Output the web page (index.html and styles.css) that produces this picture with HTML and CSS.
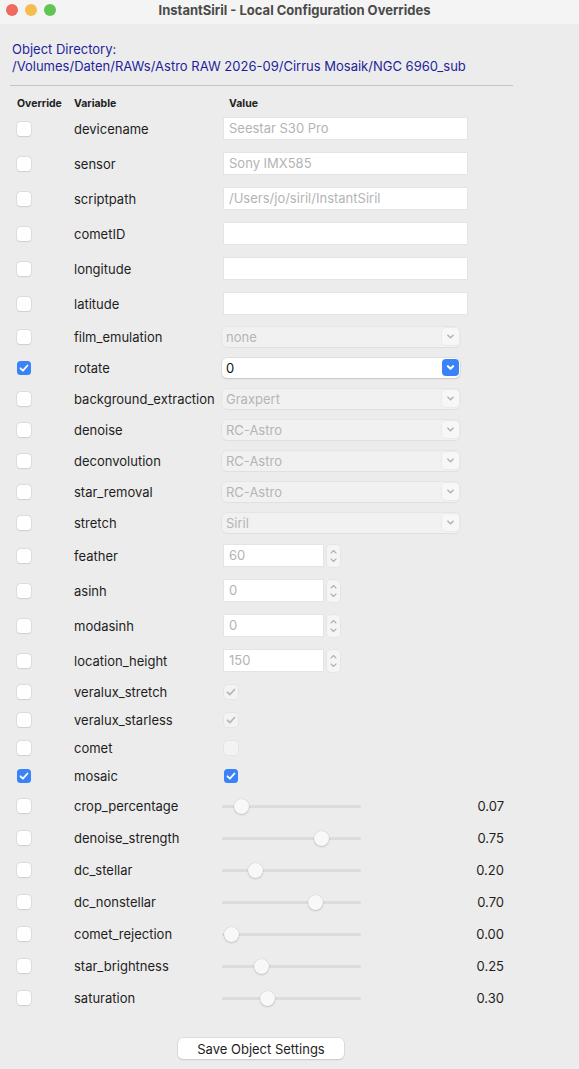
FILE: index.html
```html
<!DOCTYPE html>
<html>
<head>
<meta charset="utf-8">
<link rel="stylesheet" href="styles.css">
</head>
<body>
<div class="titlebar">
  <div class="lights"><span class="light red"></span><span class="light yellow"></span><span class="light green"></span></div>
  <div class="title">InstantSiril - Local Configuration Overrides</div>
</div>
<div class="main">
  <div class="dir">Object Directory:<br>/Volumes/Daten/RAWs/Astro RAW 2026-09/Cirrus Mosaik/NGC 6960_sub</div>
  <div class="rule"></div>
  <div class="table">
    <div class="row head"><span>Override</span><span>Variable</span><span class="vh">Value</span></div>

    <div class="row r-text"><span class="cb"></span><span class="var">devicename</span><div class="tin ph">Seestar S30 Pro</div></div>
    <div class="row r-text"><span class="cb"></span><span class="var">sensor</span><div class="tin ph">Sony IMX585</div></div>
    <div class="row r-text"><span class="cb"></span><span class="var">scriptpath</span><div class="tin ph">/Users/jo/siril/InstantSiril</div></div>
    <div class="row r-text"><span class="cb"></span><span class="var">cometID</span><div class="tin"></div></div>
    <div class="row r-text"><span class="cb"></span><span class="var">longitude</span><div class="tin"></div></div>
    <div class="row r-text"><span class="cb"></span><span class="var">latitude</span><div class="tin"></div></div>

    <div class="row r-drop"><span class="cb"></span><span class="var">film_emulation</span><div class="dd"><span>none</span><span class="chev"><svg viewBox="0 0 10 10"><path d="M3 4l2 2 2-2"/></svg></span></div></div>
    <div class="row r-drop"><span class="cb on"><svg viewBox="0 0 14 14"><path d="M3.5 7.3l2.4 2.4 4.6-5.2"/></svg></span><span class="var">rotate</span><div class="dd active"><span>0</span><span class="chev"><svg viewBox="0 0 10 10"><path d="M3 4l2 2 2-2"/></svg></span></div></div>
    <div class="row r-drop"><span class="cb"></span><span class="var">background_extraction</span><div class="dd"><span>Graxpert</span><span class="chev"><svg viewBox="0 0 10 10"><path d="M3 4l2 2 2-2"/></svg></span></div></div>
    <div class="row r-drop"><span class="cb"></span><span class="var">denoise</span><div class="dd"><span>RC-Astro</span><span class="chev"><svg viewBox="0 0 10 10"><path d="M3 4l2 2 2-2"/></svg></span></div></div>
    <div class="row r-drop"><span class="cb"></span><span class="var">deconvolution</span><div class="dd"><span>RC-Astro</span><span class="chev"><svg viewBox="0 0 10 10"><path d="M3 4l2 2 2-2"/></svg></span></div></div>
    <div class="row r-drop"><span class="cb"></span><span class="var">star_removal</span><div class="dd"><span>RC-Astro</span><span class="chev"><svg viewBox="0 0 10 10"><path d="M3 4l2 2 2-2"/></svg></span></div></div>
    <div class="row r-drop"><span class="cb"></span><span class="var">stretch</span><div class="dd"><span>Siril</span><span class="chev"><svg viewBox="0 0 10 10"><path d="M3 4l2 2 2-2"/></svg></span></div></div>

    <div class="row r-spin"><span class="cb"></span><span class="var">feather</span><div class="spin"><div class="sin">60</div><div class="step"><svg viewBox="0 0 12 22"><path d="M3.5 8l2.5-2.5 2.5 2.5M3.5 14l2.5 2.5 2.5-2.5"/></svg></div></div></div>
    <div class="row r-spin"><span class="cb"></span><span class="var">asinh</span><div class="spin"><div class="sin">0</div><div class="step"><svg viewBox="0 0 12 22"><path d="M3.5 8l2.5-2.5 2.5 2.5M3.5 14l2.5 2.5 2.5-2.5"/></svg></div></div></div>
    <div class="row r-spin"><span class="cb"></span><span class="var">modasinh</span><div class="spin"><div class="sin">0</div><div class="step"><svg viewBox="0 0 12 22"><path d="M3.5 8l2.5-2.5 2.5 2.5M3.5 14l2.5 2.5 2.5-2.5"/></svg></div></div></div>
    <div class="row r-spin"><span class="cb"></span><span class="var">location_height</span><div class="spin"><div class="sin">150</div><div class="step"><svg viewBox="0 0 12 22"><path d="M3.5 8l2.5-2.5 2.5 2.5M3.5 14l2.5 2.5 2.5-2.5"/></svg></div></div></div>

    <div class="row r-check"><span class="cb"></span><span class="var">veralux_stretch</span><span class="cb vcb dis"><svg viewBox="0 0 14 14"><path d="M3.5 7.3l2.4 2.4 4.6-5.2"/></svg></span></div>
    <div class="row r-check"><span class="cb"></span><span class="var">veralux_starless</span><span class="cb vcb dis"><svg viewBox="0 0 14 14"><path d="M3.5 7.3l2.4 2.4 4.6-5.2"/></svg></span></div>
    <div class="row r-check"><span class="cb"></span><span class="var">comet</span><span class="cb vcb dis"></span></div>
    <div class="row r-check"><span class="cb on"><svg viewBox="0 0 14 14"><path d="M3.5 7.3l2.4 2.4 4.6-5.2"/></svg></span><span class="var">mosaic</span><span class="cb vcb on"><svg viewBox="0 0 14 14"><path d="M3.5 7.3l2.4 2.4 4.6-5.2"/></svg></span></div>

    <div class="row r-slide"><span class="cb"></span><span class="var">crop_percentage</span><div class="sl"><div class="track"><span class="thumb" style="left:10px"></span></div><span class="val">0.07</span></div></div>
    <div class="row r-slide"><span class="cb"></span><span class="var">denoise_strength</span><div class="sl"><div class="track"><span class="thumb" style="left:90px"></span></div><span class="val">0.75</span></div></div>
    <div class="row r-slide"><span class="cb"></span><span class="var">dc_stellar</span><div class="sl"><div class="track"><span class="thumb" style="left:24px"></span></div><span class="val">0.20</span></div></div>
    <div class="row r-slide"><span class="cb"></span><span class="var">dc_nonstellar</span><div class="sl"><div class="track"><span class="thumb" style="left:84px"></span></div><span class="val">0.70</span></div></div>
    <div class="row r-slide"><span class="cb"></span><span class="var">comet_rejection</span><div class="sl"><div class="track"><span class="thumb" style="left:0px"></span></div><span class="val">0.00</span></div></div>
    <div class="row r-slide"><span class="cb"></span><span class="var">star_brightness</span><div class="sl"><div class="track"><span class="thumb" style="left:30px"></span></div><span class="val">0.25</span></div></div>
    <div class="row r-slide"><span class="cb"></span><span class="var">saturation</span><div class="sl"><div class="track"><span class="thumb" style="left:36px"></span></div><span class="val">0.30</span></div></div>
  </div>
  <div class="btnrow"><button class="btn">Save Object Settings</button></div>
</div>
</body>
</html>
```
FILE: styles.css
```css
* { box-sizing: border-box; }
html, body { margin: 0; padding: 0; }
body {
  width: 579px;
  height: 1069px;
  background: #ececec;
  font-family: Inter, "Liberation Sans", Arial, sans-serif;
  font-size: 13px;
  color: #1e1e1e;
  overflow: hidden;
}
.titlebar {
  height: 24px;
  background: #f4f4f4;
  position: relative;
  display: flex;
  align-items: center;
  justify-content: center;
}
.lights {
  position: absolute;
  left: 6px;
  top: 4px;
  display: flex;
  gap: 7px;
}
.light { width: 12px; height: 12px; border-radius: 50%; display: block; }
.red { background: #ee6a5f; }
.yellow { background: #f5bd4f; }
.green { background: #61c555; }
.title {
  font-weight: bold;
  font-size: 13px;
  color: #4a4a4a;
  margin-left: 10px;
  margin-top: -4px;
}
.main { padding: 17px 0 0 12px; }
.dir {
  color: #1f1f9a;
  font-size: 13px;
  line-height: 17px;
}
.rule {
  width: 503px;
  height: 1px;
  background: #c4c4c4;
  margin: 10px 0 10px -2px;
}
.table { margin-left: 5px; }
.row {
  display: grid;
  grid-template-columns: 57px 148px 282px;
  align-items: center;
}
.head { height: 15px; font-size: 10.5px; font-weight: bold; color: #222; }
.head .vh { padding-left: 7px; }
.r-text, .r-spin { height: 35px; }
.r-drop { height: 31px; }
.r-check { height: 28px; }
.r-slide { height: 32px; }
.var { font-size: 13px; color: #1e1e1e; white-space: nowrap; }
.cb {
  width: 14px;
  height: 14px;
  border-radius: 3.5px;
  background: #fff;
  box-shadow: 0 0 0 0.5px #cfcfcf, 0 0.5px 1px rgba(0,0,0,0.12);
  display: flex;
  align-items: center;
  justify-content: center;
}
.cb svg { width: 14px; height: 14px; fill: none; stroke: #fff; stroke-width: 1.8; stroke-linecap: round; stroke-linejoin: round; }
.cb.on { background: #3a82f7; box-shadow: none; }
.vcb { margin-left: 2px; }
.cb.dis { background: #f3f3f3; box-shadow: 0 0 0 0.5px #dedede; }
.cb.dis svg { stroke: #b9b9b9; }
.tin {
  margin-left: 2px;
  width: 243px;
  height: 21px;
  background: #fff;
  box-shadow: 0 0 0 0.5px #dcdcdc;
  padding-left: 5px;
  line-height: 21px;
}
.ph { color: #b4b4b4; }
.dd {
  width: 238px;
  height: 20px;
  border-radius: 5px;
  background: #f1f1f1;
  box-shadow: 0 0 0 0.5px #e0e0e0, 0 0.5px 1px rgba(0,0,0,0.05);
  display: flex;
  align-items: center;
  justify-content: space-between;
  padding: 0 1px 0 4px;
  color: #b5b5b5;
}
.chev {
  width: 17px;
  height: 17px;
  border-radius: 4px;
  background: #f7f7f7;
  box-shadow: 0 0 0 0.5px #e4e4e4;
  display: flex;
  align-items: center;
  justify-content: center;
}
.chev svg { width: 13px; height: 13px; fill: none; stroke: #b4b4b4; stroke-width: 1.2; stroke-linecap: round; stroke-linejoin: round; }
.dd.active {
  background: #fff;
  color: #111;
  box-shadow: 0 0 0 0.5px #cfcfcf, 0 1px 1.5px rgba(0,0,0,0.18);
}
.dd.active .chev { background: #3a82f7; box-shadow: none; }
.dd.active .chev svg { stroke: #fff; stroke-width: 1.6; }
.spin { display: flex; align-items: center; gap: 4px; margin-left: 2px; }
.sin {
  width: 99px;
  height: 21px;
  background: #fff;
  box-shadow: 0 0 0 0.5px #dcdcdc;
  padding-left: 5px;
  line-height: 21px;
  color: #b4b4b4;
}
.step {
  width: 13px;
  height: 22px;
  border-radius: 4px;
  background: #f5f5f5;
  box-shadow: 0 0 0 0.5px #dedede;
}
.step svg { width: 13px; height: 22px; display: block; fill: none; stroke: #b0b0b0; stroke-width: 1.1; stroke-linecap: round; stroke-linejoin: round; }
.sl { display: flex; align-items: center; justify-content: space-between; }
.track {
  width: 139px;
  height: 3px;
  border-radius: 2px;
  background: #dcdcdc;
  position: relative;
}
.thumb {
  position: absolute;
  top: -6px;
  width: 15px;
  height: 15px;
  margin-left: 2px;
  border-radius: 50%;
  background: #f8f8f8;
  box-shadow: 0 0 0 0.5px rgba(0,0,0,0.08), 0 1px 2px rgba(0,0,0,0.15);
}
.val { font-size: 13px; color: #1e1e1e; }
.btnrow { padding-top: 24px; padding-left: 166px; }
.btn {
  width: 166px;
  height: 21px;
  border: none;
  border-radius: 5px;
  background: #fff;
  box-shadow: 0 0 0 0.5px #cdcdcd, 0 1px 1.5px rgba(0,0,0,0.15);
  font-family: Inter, "Liberation Sans", Arial, sans-serif;
  font-size: 13px;
  color: #1e1e1e;
  padding: 0;
}
```
